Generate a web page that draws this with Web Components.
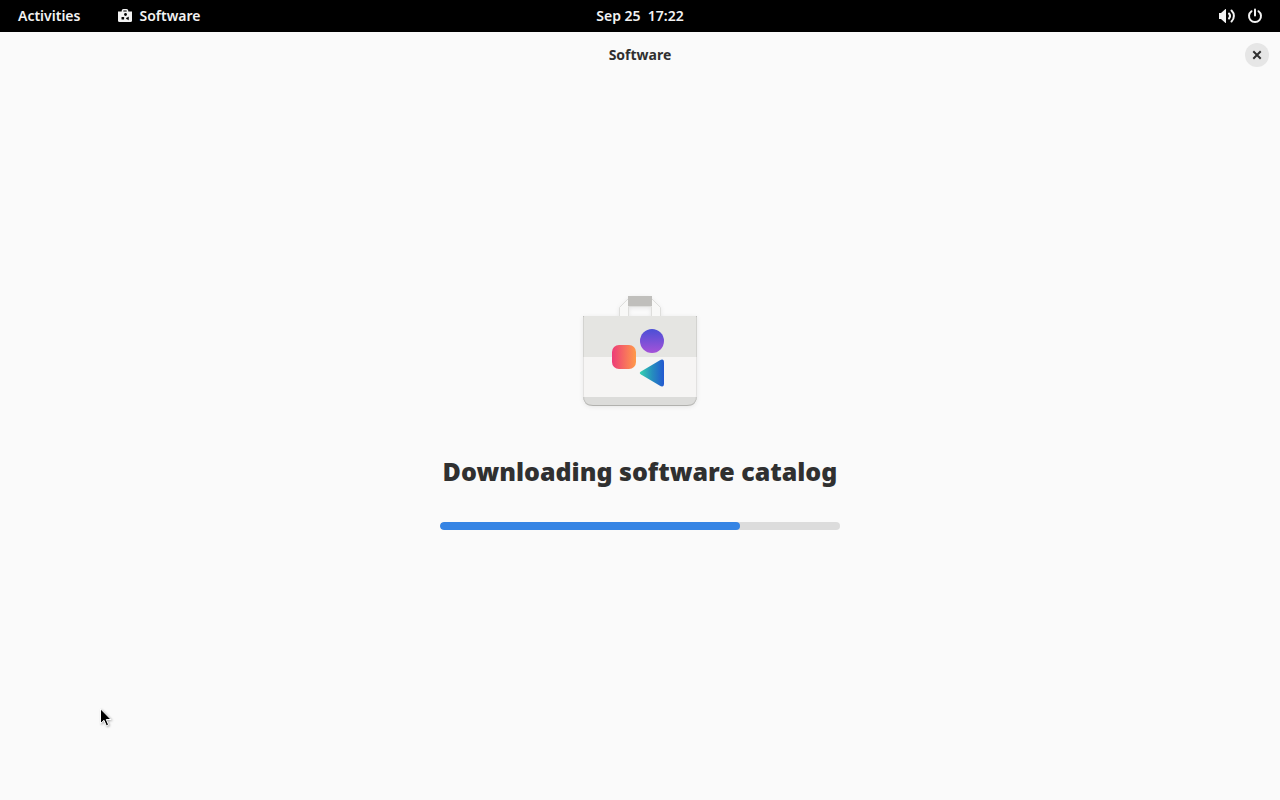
<!DOCTYPE html>
<html lang="en">
<head>
<meta charset="utf-8">
<meta name="viewport" content="width=device-width, initial-scale=1">
<title>Software</title>
<style>
  html, body {
    height: 100%;
    margin: 0;
  }
  body {
    display: flex;
    flex-direction: column;
    overflow: hidden;
    background: #fafafa;
    color: #303030;
    font-family: "Noto Sans", "Open Sans", sans-serif;
    font-size: 14px;
    line-height: 20px;
  }
  app-window {
    flex: 1;
  }
</style>
</head>
<body>
  <top-panel>
    <button slot="left" type="button">Activities</button>
    <button slot="left" type="button"><software-icon></software-icon>Software</button>
    <button slot="clock" type="button">Sep 25&nbsp; 17:22</button>
  </top-panel>
  <app-window heading="Software">
    <loading-page value="75">Downloading software catalog</loading-page>
  </app-window>
  <mouse-pointer></mouse-pointer>

<script>
  const panelTemplate = document.createElement('template');
  panelTemplate.innerHTML = `
    <style>
      :host {
        display: block;
        background: #000;
        color: #f2f2f2;
      }
      nav {
        display: grid;
        grid-template-columns: 1fr auto 1fr;
        align-items: center;
        height: 32px;
        padding: 0 6px;
      }
      .left {
        display: flex;
        gap: 13px;
      }
      ::slotted(button), .status {
        display: flex;
        align-items: center;
        gap: 6px;
        margin: 0;
        padding: 0 12px;
        height: 32px;
        border: 0;
        background: none;
        color: inherit;
        font: inherit;
        font-weight: 600;
      }
      .status {
        justify-self: end;
        gap: 12px;
        padding: 0 11px;
      }
      svg {
        display: block;
      }
    </style>
    <nav>
      <div class="left"><slot name="left"></slot></div>
      <slot name="clock"></slot>
      <button class="status" type="button" aria-label="System menu">
        <svg width="16" height="16" viewBox="0 0 16 16" fill="none" stroke="#f2f2f2" stroke-width="2" stroke-linecap="round">
          <path d="M0 5h2l4.500-4H7v14h-.5L2 11H0z" fill="#f2f2f2" stroke="none"/>
          <path d="M10 5.500c1.300 1.500 1.300 3.500 0 5"/>
          <path d="M12.500 2.500c3.200 3.200 3.200 7.800 0 11"/>
        </svg>
        <svg width="16" height="16" viewBox="0 0 16 16" fill="none" stroke="#f2f2f2" stroke-width="2" stroke-linecap="round">
          <path d="M8 1.500v6"/>
          <path d="M4.500 3.200a6 6 0 1 0 7 0"/>
        </svg>
      </button>
    </nav>
  `;

  class TopPanel extends HTMLElement {
    constructor() {
      super();
      this.attachShadow({ mode: 'open' });
      this.shadowRoot.appendChild(panelTemplate.content.cloneNode(true));
    }
  }

  const softwareIconTemplate = document.createElement('template');
  softwareIconTemplate.innerHTML = `
    <style>
      :host {
        display: block;
        width: 16px;
        height: 16px;
      }
      svg {
        display: block;
      }
    </style>
    <svg width="16" height="16" viewBox="0 0 16 16" aria-hidden="true">
      <path d="M5.500 4V2.800Q5.500 1.800 6.500 1.800h3q1 0 1 1V4" fill="none" stroke="#f2f2f2" stroke-width="1.600"/>
      <path d="M1 3.500h14v9q0 1.500-1.500 1.500h-11Q1 14 1 12.500z" fill="#f2f2f2"/>
      <circle cx="8.500" cy="6.500" r="1.400"/>
      <rect x="4.500" y="9" width="2.600" height="2.600" rx=".5"/>
      <path d="M11.500 9v2.800L9 10.400z" stroke="#000" stroke-width=".5"/>
    </svg>
  `;

  class SoftwareIcon extends HTMLElement {
    constructor() {
      super();
      this.attachShadow({ mode: 'open' });
      this.shadowRoot.appendChild(softwareIconTemplate.content.cloneNode(true));
    }
  }

  const windowTemplate = document.createElement('template');
  windowTemplate.innerHTML = `
    <style>
      :host {
        display: flex;
        flex-direction: column;
        background: #fafafa;
      }
      header {
        display: grid;
        grid-template-columns: 1fr auto 1fr;
        align-items: center;
        height: 46px;
        padding: 0 11px;
      }
      h1 {
        grid-column: 2;
        margin: 0;
        font-size: 14px;
        font-weight: 700;
      }
      button {
        display: grid;
        place-items: center;
        justify-self: end;
        width: 24px;
        height: 24px;
        padding: 0;
        border: 0;
        border-radius: 50%;
        background: #e6e6e6;
      }
      main {
        display: flex;
        flex: 1;
        align-items: center;
        justify-content: center;
      }
    </style>
    <header>
      <h1></h1>
      <button type="button" aria-label="Close">
        <svg width="16" height="16" viewBox="0 0 16 16">
          <path d="M5 5l6 6M11 5l-6 6" stroke="#2e2e2e" stroke-width="2" stroke-linecap="square"/>
        </svg>
      </button>
    </header>
    <main><slot></slot></main>
  `;

  class AppWindow extends HTMLElement {
    constructor() {
      super();
      this.attachShadow({ mode: 'open' });
      this.shadowRoot.appendChild(windowTemplate.content.cloneNode(true));
    }

    connectedCallback() {
      this.shadowRoot.querySelector('h1').textContent = this.getAttribute('heading');
    }
  }

  const loadingTemplate = document.createElement('template');
  loadingTemplate.innerHTML = `
    <style>
      :host {
        display: flex;
        flex-direction: column;
        align-items: center;
        width: 400px;
        max-width: 100%;
        padding-bottom: 60px;
      }
      svg {
        display: block;
      }
      h2 {
        margin: 36px 0 32px;
        font-size: 25px;
        line-height: 38px;
        font-weight: 900;
        text-align: center;
      }
      progress {
        display: block;
        width: 100%;
        height: 8px;
        border: 0;
        border-radius: 4px;
        overflow: hidden;
        appearance: none;
        background: #dcdcdc;
      }
      progress::-webkit-progress-bar {
        background: #dcdcdc;
      }
      progress::-webkit-progress-value {
        border-radius: 4px;
        background: #3584e4;
      }
    </style>
    <svg width="128" height="128" viewBox="0 0 128 128" aria-hidden="true">
      <defs>
        <linearGradient id="circle" x1="0" y1="0" x2="0" y2="1">
          <stop offset="0" stop-color="#4a4fd6"/>
          <stop offset="1" stop-color="#a552d8"/>
        </linearGradient>
        <linearGradient id="square">
          <stop offset="0" stop-color="#ed3c78"/>
          <stop offset="1" stop-color="#ff9a4a"/>
        </linearGradient>
        <linearGradient id="triangle">
          <stop offset="0" stop-color="#35d4b0"/>
          <stop offset=".5" stop-color="#268fbd"/>
          <stop offset="1" stop-color="#2258d0"/>
        </linearGradient>
        <filter id="shadow" x="-10%" y="-10%" width="120%" height="120%">
          <feDropShadow dx="0" dy="1" stdDeviation="2" flood-opacity=".08"/>
        </filter>
      </defs>
      <g filter="url(#shadow)">
        <path d="M43.500 29V19.500L54.500 8.500H73.500L84.500 19.500V29H75.500V18.500H52.500V29z" fill="#f8f8f7" stroke="#dededc" stroke-linejoin="round"/>
        <path d="M7 28H121V108Q121 118 111 118H17Q7 118 7 108z" fill="#c0c0bd"/>
      </g>
      <path d="M52 8H76V18H52z" fill="#c0bfbc"/>
      <path d="M7 30Q7 28 9 28H119Q121 28 121 30V107Q121 117 111 117H17Q7 117 7 107z" fill="#dcdcda"/>
      <path d="M7 30H121V109H7z" fill="#f6f5f4"/>
      <path d="M7 69V30Q7 28 9 28H119Q121 28 121 30V69z" fill="#e5e5e2"/>
      <path d="M7.500 28V107Q7.500 117.500 17 117.500H111Q120.500 117.500 120.500 107V28" fill="none" stroke="#000" stroke-opacity=".08"/>
      <circle cx="76" cy="53" r="12" fill="url(#circle)"/>
      <rect x="36" y="57" width="24" height="24" rx="7" fill="url(#square)"/>
      <path d="M65 83.500L83.500 72.500Q88 70 88 74.500V95.500Q88 100 83.500 97.500L65 86.500Q62.500 85 65 83.500z" fill="url(#triangle)"/>
    </svg>
    <h2 id="title"><slot></slot></h2>
    <progress max="100" aria-labelledby="title"></progress>
  `;

  class LoadingPage extends HTMLElement {
    constructor() {
      super();
      this.attachShadow({ mode: 'open' });
      this.shadowRoot.appendChild(loadingTemplate.content.cloneNode(true));
    }

    connectedCallback() {
      this.shadowRoot.querySelector('progress').value = Number(this.getAttribute('value'));
    }
  }

  // Floats over the desktop
  const pointerTemplate = document.createElement('template');
  pointerTemplate.innerHTML = `
    <style>
      :host {
        position: absolute;
        left: 100px;
        top: 708px;
        pointer-events: none;
      }
      svg {
        display: block;
        overflow: visible;
        filter: drop-shadow(1px 1px 1px rgba(0, 0, 0, .3));
      }
    </style>
    <svg width="12" height="20" viewBox="0 0 12 20" aria-hidden="true">
      <path d="M.5.800V15.500L4 12.300L6.300 17.800L8.600 16.800L6.300 11.500H11z" fill="#000" stroke="#fff"/>
    </svg>
  `;

  class MousePointer extends HTMLElement {
    constructor() {
      super();
      this.attachShadow({ mode: 'open' });
      this.shadowRoot.appendChild(pointerTemplate.content.cloneNode(true));
    }
  }

  customElements.define('software-icon', SoftwareIcon);
  customElements.define('top-panel', TopPanel);
  customElements.define('app-window', AppWindow);
  customElements.define('loading-page', LoadingPage);
  customElements.define('mouse-pointer', MousePointer);
</script>
</body>
</html>
